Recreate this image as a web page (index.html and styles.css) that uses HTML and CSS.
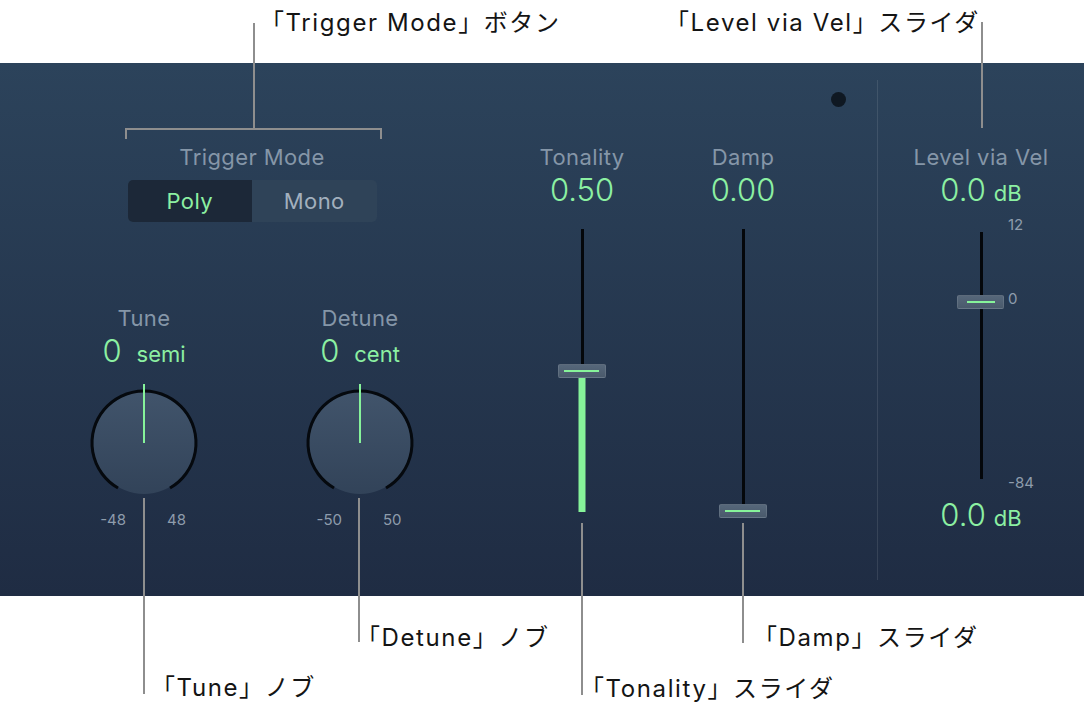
FILE: index.html
```html
<!DOCTYPE html>
<html lang="ja">
<head>
  <meta charset="UTF-8">
  <meta name="viewport" content="width=device-width, initial-scale=1.0">
  <title>Tonewheel Controls</title>
  <link rel="stylesheet" href="styles.css">
</head>
<body>
  <div class="page">
    <!-- Callout texts above the panel -->
    <div class="notes-top">
      <span class="note note-trigger">「Trigger Mode」ボタン</span>
      <span class="note note-level">「Level via Vel」スライダ</span>
    </div>

    <div class="panel">
      <section class="left">
        <div class="trigger">
          <div class="label">Trigger Mode</div>
          <div class="segment">
            <button type="button" class="seg seg-on">Poly</button>
            <button type="button" class="seg">Mono</button>
          </div>
        </div>

        <div class="knobs">
          <div class="knob-col">
            <div class="label">Tune</div>
            <div class="value">0<span class="unit unit-wide">semi</span></div>
            <svg class="knob" width="120" height="120" viewBox="0 0 120 120">
              <defs>
                <linearGradient id="knobTune" x1="0" y1="0" x2="0" y2="1">
                  <stop offset="0" stop-color="#41546b" />
                  <stop offset="1" stop-color="#324359" />
                </linearGradient>
              </defs>
              <circle cx="60" cy="60" r="51" fill="url(#knobTune)" />
              <path d="M34 105.03 A52 52 0 1 1 86 105.03" fill="none" stroke="#05090e" stroke-width="3" />
              <line x1="60" y1="1" x2="60" y2="60" stroke="#86f39a" stroke-width="2" />
            </svg>
            <div class="scale"><span>-48</span><span>48</span></div>
          </div>

          <div class="knob-col">
            <div class="label">Detune</div>
            <div class="value">0<span class="unit unit-wide">cent</span></div>
            <svg class="knob" width="120" height="120" viewBox="0 0 120 120">
              <defs>
                <linearGradient id="knobDetune" x1="0" y1="0" x2="0" y2="1">
                  <stop offset="0" stop-color="#41546b" />
                  <stop offset="1" stop-color="#324359" />
                </linearGradient>
              </defs>
              <circle cx="60" cy="60" r="51" fill="url(#knobDetune)" />
              <path d="M34 105.03 A52 52 0 1 1 86 105.03" fill="none" stroke="#05090e" stroke-width="3" />
              <line x1="60" y1="1" x2="60" y2="60" stroke="#86f39a" stroke-width="2" />
            </svg>
            <div class="scale"><span>-50</span><span>50</span></div>
          </div>
        </div>
      </section>

      <section class="slider-col slider-tonality">
        <div class="label">Tonality</div>
        <div class="value">0.50</div>
        <div class="slider">
          <div class="track">
            <div class="fill" style="height: 50%"></div>
          </div>
          <div class="thumb" style="bottom: calc(50% - 7px)"></div>
        </div>
      </section>

      <section class="slider-col slider-damp">
        <div class="label">Damp</div>
        <div class="value">0.00</div>
        <div class="slider">
          <div class="track"></div>
          <div class="thumb" style="bottom: -6px"></div>
        </div>
      </section>

      <div class="dot-col">
        <div class="dot"></div>
      </div>

      <div class="divider"></div>

      <section class="slider-col level-col">
        <div class="label">Level via Vel</div>
        <div class="value">0.0<span class="unit">dB</span></div>
        <div class="slider slider-level">
          <div class="track"></div>
          <div class="thumb thumb-short" style="bottom: calc(71.5% - 7px)"></div>
          <span class="tick tick-max">12</span>
          <span class="tick tick-zero">0</span>
          <span class="tick tick-min">-84</span>
        </div>
        <div class="value value-bottom">0.0<span class="unit">dB</span></div>
      </section>
    </div>

    <!-- Callout texts below the panel -->
    <div class="notes-bottom">
      <span class="note note-tune">「Tune」ノブ</span>
      <span class="note note-detune">「Detune」ノブ</span>
      <span class="note note-tonality">「Tonality」スライダ</span>
      <span class="note note-damp">「Damp」スライダ</span>
    </div>

    <!-- Leader lines -->
    <div class="lead lead-trigger"></div>
    <div class="bracket"></div>
    <div class="lead lead-level"></div>
    <div class="lead lead-tune"></div>
    <div class="lead lead-detune"></div>
    <div class="lead lead-tonality"></div>
    <div class="lead lead-damp"></div>
  </div>
</body>
</html>
```

FILE: styles.css
```css
/* Base */
:root {
  --green: #8cf0a2;
  --label: #8596a8;
  --tick: #8e9cac;
  --track: #04070b;
  --lead: #8e8e8e;
}

* {
  margin: 0;
  padding: 0;
  box-sizing: border-box;
}

body {
  font-family: Inter, "Noto Sans CJK JP", sans-serif;
  background-color: #ffffff;
  color: #141414;
}

.page {
  position: relative;
  width: 1085px;
  height: 716px;
  overflow: hidden;
}

/* Callout texts */
.notes-top {
  position: relative;
  height: 63px;
}

.notes-bottom {
  position: relative;
  height: 120px;
}

.note {
  position: absolute;
  font-size: 24px;
  line-height: 28px;
  letter-spacing: 1.6px;
  white-space: nowrap;
}

.note-trigger { left: 260px; top: 9px; }
.note-level { left: 665px; top: 9px; }
.note-tune { left: 151px; top: 78px; }
.note-detune { left: 356px; top: 28px; }
.note-tonality { left: 580px; top: 79px; }
.note-damp { left: 753px; top: 28px; }

/* Leader lines */
.lead {
  position: absolute;
  width: 2px;
  background-color: var(--lead);
}

.lead-trigger { left: 253px; top: 23px; height: 106px; }
.lead-level { left: 981px; top: 22px; height: 106px; }
.lead-tune { left: 143px; top: 498px; height: 196px; }
.lead-detune { left: 358px; top: 498px; height: 144px; }
.lead-tonality { left: 581px; top: 523px; height: 172px; }
.lead-damp { left: 742px; top: 523px; height: 120px; }

.bracket {
  position: absolute;
  left: 125px;
  top: 128px;
  width: 257px;
  height: 11px;
  border: 2px solid var(--lead);
  border-bottom: none;
}

/* Panel */
.panel {
  display: flex;
  width: 1084px;
  height: 533px;
  background: linear-gradient(to bottom, #2c435b, #1f2c43);
}

.label {
  font-size: 22px;
  line-height: 24px;
  letter-spacing: 0.4px;
  color: var(--label);
  white-space: nowrap;
}

.value {
  margin-top: 4px;
  font-size: 31px;
  font-weight: 300;
  line-height: 34px;
  color: var(--green);
  white-space: nowrap;
}

.unit {
  margin-left: 8px;
  font-size: 22px;
  font-weight: 400;
}

.unit-wide {
  margin-left: 15px;
}

/* Left section: trigger mode + knobs */
.left {
  display: flex;
  flex-direction: column;
  width: 468px;
  padding-left: 36px;
}

.trigger {
  display: flex;
  flex-direction: column;
  align-items: center;
  padding-top: 82px;
}

.segment {
  display: flex;
  width: 249px;
  height: 42px;
  margin-top: 11px;
  border-radius: 5px;
  overflow: hidden;
  background-color: #2f4358;
}

.seg {
  flex: 1;
  border: none;
  background: transparent;
  font-family: inherit;
  font-size: 22px;
  letter-spacing: 0.4px;
  color: #a3b0be;
  cursor: pointer;
}

.seg-on {
  background-color: #1c2838;
  color: var(--green);
}

.knobs {
  display: flex;
  margin-top: 84px;
}

.knob-col {
  display: flex;
  flex-direction: column;
  align-items: center;
  width: 216px;
}

.knob {
  display: block;
  margin-top: 12px;
}

.scale {
  display: flex;
  gap: 41px;
  margin-top: 8px;
  padding-left: 5px;
  font-size: 15px;
  line-height: 18px;
  color: var(--tick);
}

.scale span {
  width: 40px;
}

.scale span:first-child {
  text-align: right;
}

/* Vertical sliders */
.slider-col {
  display: flex;
  flex-direction: column;
  align-items: center;
  padding-top: 82px;
}

.slider-tonality {
  width: 160px;
  margin-left: 34px;
}

.slider-damp {
  width: 162px;
}

.slider {
  position: relative;
  display: flex;
  justify-content: center;
  width: 48px;
  height: 283px;
  margin-top: 22px;
}

.track {
  position: relative;
  width: 3px;
  height: 100%;
  background-color: var(--track);
}

.fill {
  position: absolute;
  left: 50%;
  bottom: 0;
  width: 7px;
  transform: translateX(-50%);
  background-color: #86f39a;
}

.thumb {
  position: absolute;
  left: 0;
  width: 48px;
  height: 14px;
  border: 1px solid rgba(255, 255, 255, 0.1);
  border-radius: 2px;
  background: linear-gradient(to bottom, #56677a, #4a5a6c);
}

.thumb::after {
  content: "";
  position: absolute;
  left: 5px;
  right: 6px;
  top: 5px;
  height: 2px;
  background-color: #86f39a;
}

.thumb-short {
  width: 47px;
}

.thumb-short::after {
  left: 9px;
  right: 8px;
}

/* Dot + divider */
.dot-col {
  width: 53px;
  padding: 29px 0 0 7px;
}

.dot {
  width: 15px;
  height: 15px;
  border-radius: 50%;
  background-color: #0f1822;
}

.divider {
  width: 1px;
  margin: 17px 0 16px;
  background-color: rgba(255, 255, 255, 0.1);
}

/* Level via Vel */
.level-col {
  width: 206px;
}

.slider-level {
  height: 247px;
}

.tick {
  position: absolute;
  left: 51px;
  font-size: 15px;
  line-height: 18px;
  color: var(--tick);
}

.tick-max { top: -16px; }
.tick-zero { top: 58px; }
.tick-min { top: 242px; }

.value-bottom {
  margin-top: 19px;
}
```
